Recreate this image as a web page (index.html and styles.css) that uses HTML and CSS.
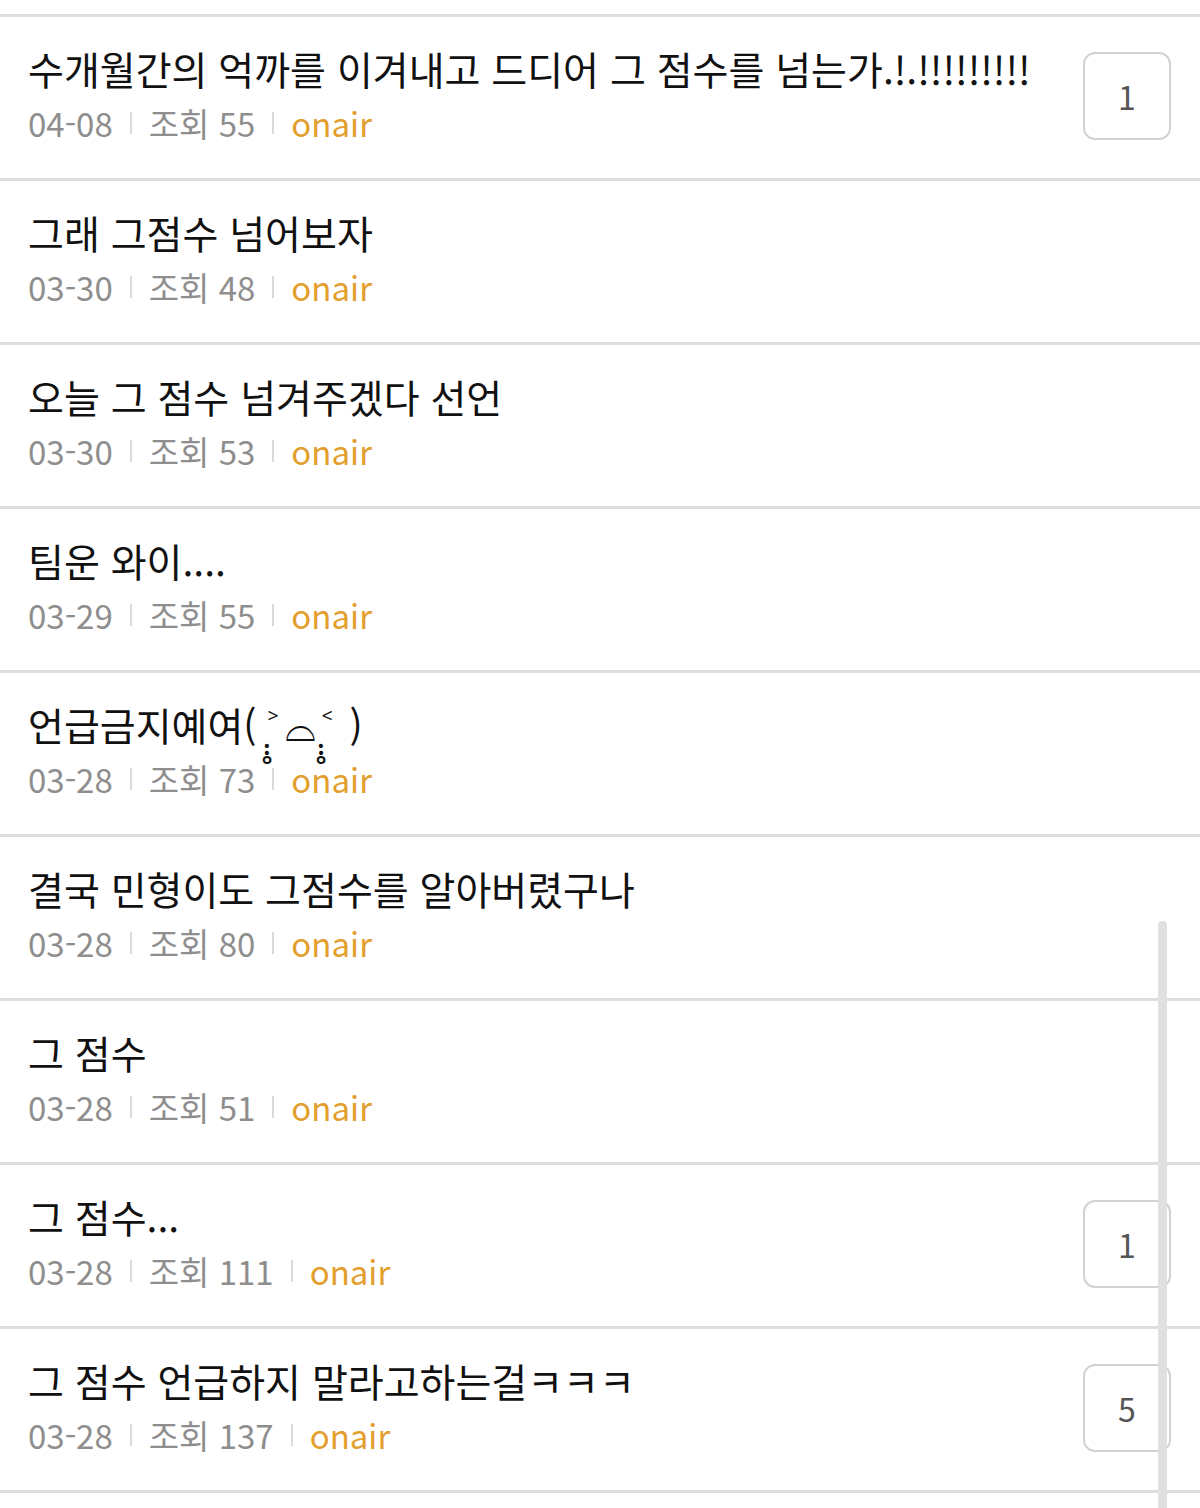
FILE: index.html
```html
<!DOCTYPE html>
<html lang="ko">
<head>
<meta charset="utf-8">
<title>게시판</title>
<link rel="stylesheet" href="styles.css">
</head>
<body>
<ul class="list">
  <li class="row">
    <div class="info">
      <div class="title">수개월간의 억까를 이겨내고 드디어 그 점수를 넘는가.!.!!!!!!!!!</div>
      <div class="meta"><span>04-08</span><i class="bar"></i><span>조회 55</span><i class="bar"></i><span class="nick">onair</span></div>
    </div>
    <div class="cmt">1</div>
  </li>
  <li class="row">
    <div class="info">
      <div class="title">그래 그점수 넘어보자</div>
      <div class="meta"><span>03-30</span><i class="bar"></i><span>조회 48</span><i class="bar"></i><span class="nick">onair</span></div>
    </div>
  </li>
  <li class="row">
    <div class="info">
      <div class="title">오늘 그 점수 넘겨주겠다 선언</div>
      <div class="meta"><span>03-30</span><i class="bar"></i><span>조회 53</span><i class="bar"></i><span class="nick">onair</span></div>
    </div>
  </li>
  <li class="row">
    <div class="info">
      <div class="title">팀운 와이....</div>
      <div class="meta"><span>03-29</span><i class="bar"></i><span>조회 55</span><i class="bar"></i><span class="nick">onair</span></div>
    </div>
  </li>
  <li class="row">
    <div class="info">
      <div class="title">언급금지예여( <span class="emo">˃̣̣̥⌓˂̣̣̥</span> )</div>
      <div class="meta"><span>03-28</span><i class="bar"></i><span>조회 73</span><i class="bar"></i><span class="nick">onair</span></div>
    </div>
  </li>
  <li class="row">
    <div class="info">
      <div class="title">결국 민형이도 그점수를 알아버렸구나</div>
      <div class="meta"><span>03-28</span><i class="bar"></i><span>조회 80</span><i class="bar"></i><span class="nick">onair</span></div>
    </div>
  </li>
  <li class="row">
    <div class="info">
      <div class="title">그 점수</div>
      <div class="meta"><span>03-28</span><i class="bar"></i><span>조회 51</span><i class="bar"></i><span class="nick">onair</span></div>
    </div>
  </li>
  <li class="row">
    <div class="info">
      <div class="title">그 점수...</div>
      <div class="meta"><span>03-28</span><i class="bar"></i><span>조회 111</span><i class="bar"></i><span class="nick">onair</span></div>
    </div>
    <div class="cmt">1</div>
  </li>
  <li class="row">
    <div class="info">
      <div class="title">그 점수 언급하지 말라고하는걸ㅋㅋㅋ</div>
      <div class="meta"><span>03-28</span><i class="bar"></i><span>조회 137</span><i class="bar"></i><span class="nick">onair</span></div>
    </div>
    <div class="cmt">5</div>
  </li>
</ul>
<div class="scrollbar"></div>
</body>
</html>
```
FILE: styles.css
```css
html, body {
  margin: 0;
  padding: 0;
  background: #ffffff;
  overflow: hidden;
  height: 1508px;
}
body {
  font-family: "Noto Sans CJK KR", "Noto Sans", sans-serif;
  color: #111;
  position: relative;
}
.list {
  list-style: none;
  margin: 14px 0 0 0;
  padding: 0;
  border-top: 3px solid #dedede;
}
.row {
  display: flex;
  align-items: center;
  height: 157px;
  box-sizing: content-box;
  border-bottom: 3px solid #dedede;
  padding: 0 29px 4px 28px;
}
.info {
  flex: 1;
  display: flex;
  flex-direction: column;
  gap: 5px;
  min-width: 0;
}
.title {
  font-size: 39px;
  line-height: 50px;
  color: #111;
  white-space: nowrap;
}
.emo {
  letter-spacing: 6px;
}
.meta {
  display: flex;
  align-items: center;
  font-size: 33px;
  line-height: 50px;
  color: #8e8e8e;
}
.bar {
  display: inline-block;
  width: 2px;
  height: 22px;
  background: #dadada;
  margin: 0 17px;
}
.nick {
  color: #e39e2d;
}
.cmt {
  flex: none;
  width: 84px;
  height: 84px;
  border: 2px solid #d2d2d2;
  border-radius: 12px;
  display: flex;
  align-items: center;
  justify-content: center;
  font-size: 32px;
  color: #555;
}
.scrollbar {
  position: absolute;
  left: 1158px;
  top: 921px;
  width: 9px;
  height: 600px;
  background: #e0e0e0;
  border-radius: 4px 4px 0 0;
}
```
